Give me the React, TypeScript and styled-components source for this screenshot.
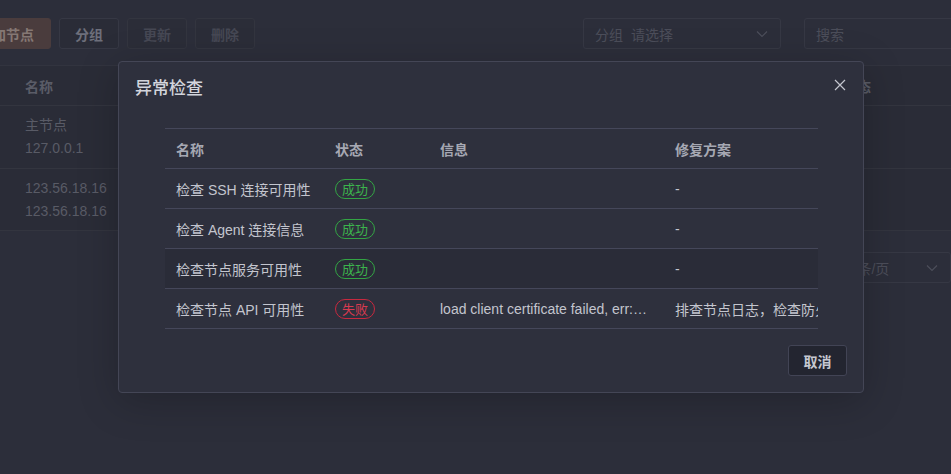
import styled, { createGlobalStyle, css } from "styled-components";

const GlobalStyle = createGlobalStyle`
  html, body {
    margin: 0;
    padding: 0;
    background: #2c2e3a;
    overflow: hidden;
  }
  body {
    font-family: "Liberation Sans", "Noto Sans CJK SC", sans-serif;
    font-size: 14px;
  }
`;

const Page = styled.div`
  position: relative;
  width: 951px;
  height: 474px;
  overflow: hidden;
  padding-top: 18px;
  box-sizing: border-box;
`;

const Toolbar = styled.div`
  display: flex;
  align-items: center;
  gap: 8px;
  margin-left: -42px;
  height: 31px;
`;

type Variant = "primary" | "default" | "disabled";

const ToolButton = styled.div<{ $variant: Variant }>`
  height: 31px;
  box-sizing: border-box;
  padding: 0 15px;
  display: flex;
  align-items: center;
  flex-shrink: 0;
  white-space: nowrap;
  border-radius: 3px;
  font-size: 14px;
  font-weight: 600;
  ${({ $variant }) =>
    $variant === "primary"
      ? css`
          padding: 0 16px 0 19px;
          background: #4a3c3d;
          color: #857874;
          border: 1px solid #4a3c3d;
        `
      : $variant === "default"
      ? css`
          background: #2a2c37;
          color: #6d6f7b;
          border: 1px solid #363844;
        `
      : css`
          background: #2b2d38;
          color: #464854;
          border: 1px solid #33353f;
        `}
`;

const SelectBox = styled.div<{ $width: number; $gapLeft?: number }>`
  width: ${({ $width }) => $width}px;
  margin-left: ${({ $gapLeft = 0 }) => $gapLeft}px;
  height: 31px;
  box-sizing: border-box;
  border: 1px solid #363844;
  border-radius: 3px;
  display: flex;
  align-items: center;
  padding: 0 12px 0 11px;
  color: #4c4e5a;
  font-size: 14px;
  gap: 8px;
  flex-shrink: 0;
  white-space: nowrap;
`;

const Grow = styled.span`
  flex: 1;
`;

const BgTable = styled.div`
  margin-top: 16px;
  background: #2a2c37;
  border-top: 1px solid #32343f;
`;

const BgRow = styled.div<{ $h: number }>`
  height: ${({ $h }) => $h}px;
  box-sizing: border-box;
  border-bottom: 1px solid #33353f;
  display: flex;
  align-items: center;
  padding-left: 25px;
  color: #595b66;
  font-size: 14px;
`;

const BgHeadText = styled.span`
  font-weight: 600;
  color: #5a5c67;
`;

const BgHeadRight = styled.span`
  margin-left: auto;
  margin-right: 80px;
  font-weight: 600;
  color: #5a5c67;
`;

const BgCellLines = styled.div`
  display: flex;
  flex-direction: column;
  gap: 4px;
  line-height: 19px;
`;

const Pager = styled.div`
  margin-top: 21px;
  display: flex;
  justify-content: flex-end;
`;

const Chevron = ({ color = "#4c4e5a" }: { color?: string }) => (
  <svg width="12" height="8" viewBox="0 0 12 8">
    <polyline points="1,1.5 6,6.5 11,1.5" fill="none" stroke={color} strokeWidth="1.2" />
  </svg>
);

const Modal = styled.div`
  position: absolute;
  left: 118px;
  top: 61px;
  width: 746px;
  box-sizing: border-box;
  background: #2e303d;
  border: 1px solid #444656;
  border-radius: 4px;
  box-shadow: 0 8px 40px rgba(0, 0, 0, 0.22);
  display: flex;
  flex-direction: column;
`;

const ModalHeader = styled.div`
  display: flex;
  justify-content: space-between;
  align-items: flex-start;
  padding: 16px 17px 0 16px;
`;

const Title = styled.div`
  font-size: 17px;
  line-height: 22px;
  font-weight: 500;
  color: #d2d4dc;
`;

const CloseButton = styled.div`
  width: 12px;
  height: 12px;
  margin-top: 1px;
  display: flex;
  cursor: pointer;
`;

const ModalBody = styled.div`
  padding: 28px 45px 0 46px;
`;

const TableScroll = styled.div`
  width: 653px;
  overflow: hidden;
`;

const COLS = "159px 105px 235px 400px";

const Row = styled.div<{ $head?: boolean; $hover?: boolean }>`
  display: grid;
  grid-template-columns: ${COLS};
  width: 899px;
  height: ${({ $head }) => ($head ? 41 : 40)}px;
  box-sizing: border-box;
  border-bottom: 1px solid #45475a;
  ${({ $head }) => $head && css`border-top: 1px solid #45475a;`}
  background: ${({ $hover }) => ($hover ? "#2a2c38" : "transparent")};
`;

const Cell = styled.div<{ $head?: boolean }>`
  display: flex;
  align-items: center;
  padding: 0 11px;
  min-width: 0;
  overflow: hidden;
  font-size: 14px;
  white-space: nowrap;
  color: ${({ $head }) => ($head ? "#a6a8b3" : "#c3c5ce")};
  font-weight: ${({ $head }) => ($head ? 600 : 400)};
`;

const Ellipsis = styled.span`
  min-width: 0;
  overflow: hidden;
  text-overflow: ellipsis;
  white-space: nowrap;
`;

const Tag = styled.span<{ $ok: boolean }>`
  display: inline-flex;
  align-items: center;
  height: 20px;
  box-sizing: border-box;
  padding: 0 6px;
  border-radius: 10px;
  font-size: 13px;
  border: 1px solid ${({ $ok }) => ($ok ? "#33a544" : "#c8293f")};
  color: ${({ $ok }) => ($ok ? "#3cb34c" : "#d93a50")};
`;

const ModalFooter = styled.div`
  display: flex;
  justify-content: flex-end;
  padding: 16px 16px 16px;
`;

const CancelButton = styled.div`
  height: 31px;
  width: 59px;
  box-sizing: border-box;
  display: flex;
  align-items: center;
  justify-content: center;
  background: #232530;
  border: 1px solid #424455;
  border-radius: 3px;
  color: #c6c8d1;
  font-size: 14px;
  font-weight: 600;
`;

const checks = [
  { name: "检查 SSH 连接可用性", ok: true, info: "", fix: "-" },
  { name: "检查 Agent 连接信息", ok: true, info: "", fix: "-" },
  { name: "检查节点服务可用性", ok: true, info: "", fix: "-", hover: true },
  {
    name: "检查节点 API 可用性",
    ok: false,
    info: "load client certificate failed, err:open /etc/agent/cert.pem",
    fix: "排查节点日志，检查防火墙与证书配置",
  },
];

const App = () => {
  return (
    <>
      <GlobalStyle />
      <Page>
        <Toolbar>
          <ToolButton $variant="primary">添加节点</ToolButton>
          <ToolButton $variant="default">分组</ToolButton>
          <ToolButton $variant="disabled">更新</ToolButton>
          <ToolButton $variant="disabled">删除</ToolButton>
          <SelectBox $width={198} $gapLeft={320}>
            <span>分组</span>
            <span>请选择</span>
            <Grow />
            <Chevron />
          </SelectBox>
          <SelectBox $width={200} $gapLeft={15}>
            <span>搜索</span>
          </SelectBox>
        </Toolbar>

        <BgTable>
          <BgRow $h={40}>
            <BgHeadText>名称</BgHeadText>
            <BgHeadRight>状态</BgHeadRight>
          </BgRow>
          <BgRow $h={63}>
            <BgCellLines>
              <span>主节点</span>
              <span>127.0.0.1</span>
            </BgCellLines>
          </BgRow>
          <BgRow $h={62}>
            <BgCellLines>
              <span>123.56.18.16</span>
              <span>123.56.18.16</span>
            </BgCellLines>
          </BgRow>
        </BgTable>

        <Pager>
          <SelectBox $width={125}>
            <span>10 条/页</span>
            <Grow />
            <Chevron />
          </SelectBox>
        </Pager>

        <Modal>
          <ModalHeader>
            <Title>异常检查</Title>
            <CloseButton>
              <svg width="12" height="12" viewBox="0 0 12 12">
                <path d="M1 1 L11 11 M11 1 L1 11" stroke="#c4c6cf" strokeWidth="1.2" fill="none" />
              </svg>
            </CloseButton>
          </ModalHeader>
          <ModalBody>
            <TableScroll>
              <Row $head>
                <Cell $head>名称</Cell>
                <Cell $head>状态</Cell>
                <Cell $head>信息</Cell>
                <Cell $head>修复方案</Cell>
              </Row>
              {checks.map((c) => (
                <Row key={c.name} $hover={c.hover}>
                  <Cell>{c.name}</Cell>
                  <Cell>
                    <Tag $ok={c.ok}>{c.ok ? "成功" : "失败"}</Tag>
                  </Cell>
                  <Cell>
                    <Ellipsis>{c.info}</Ellipsis>
                  </Cell>
                  <Cell>{c.fix}</Cell>
                </Row>
              ))}
            </TableScroll>
          </ModalBody>
          <ModalFooter>
            <CancelButton>取消</CancelButton>
          </ModalFooter>
        </Modal>
      </Page>
    </>
  );
};

export default App;
